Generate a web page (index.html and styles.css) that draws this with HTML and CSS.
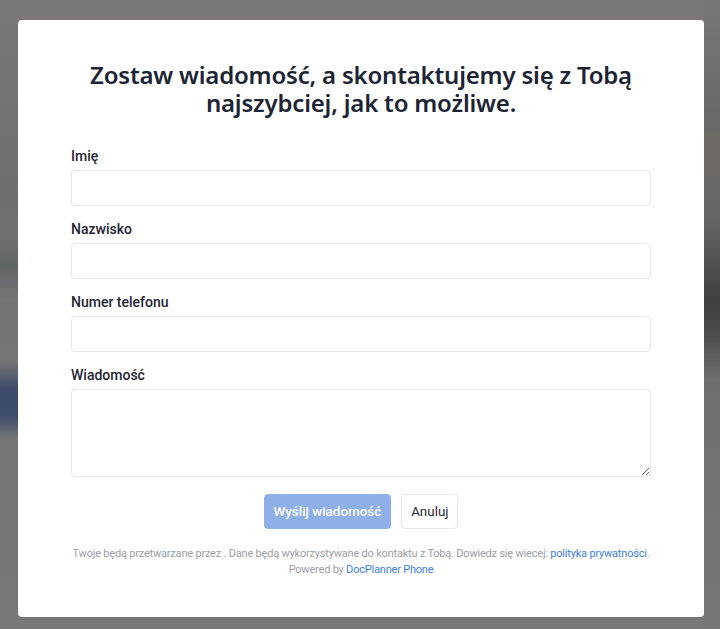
FILE: index.html
```html
<!DOCTYPE html>
<html lang="pl">
<head>
<meta charset="utf-8">
<title>Kontakt</title>
<link rel="stylesheet" href="styles.css">
</head>
<body>
<div class="backdrop"></div>
<div class="modal">
  <h1 class="title">Zostaw wiadomość, a skontaktujemy się z Tobą najszybciej, jak to możliwe.</h1>
  <form class="form">
    <div class="field">
      <label class="label">Imię</label>
      <input class="input" type="text">
    </div>
    <div class="field">
      <label class="label">Nazwisko</label>
      <input class="input" type="text">
    </div>
    <div class="field">
      <label class="label">Numer telefonu</label>
      <input class="input" type="text">
    </div>
    <div class="field">
      <label class="label">Wiadomość</label>
      <textarea class="textarea"></textarea>
    </div>
    <div class="actions">
      <button type="button" class="btn btn-primary">Wyślij wiadomość</button>
      <button type="button" class="btn btn-secondary">Anuluj</button>
    </div>
  </form>
  <p class="footer">Twoje będą przetwarzane przez . Dane będą wykorzystywane do kontaktu z Tobą. Dowiedz się wiecej: <a class="link" href="#">polityka prywatności</a>.<br>Powered by <a class="link" href="#">DocPlanner Phone</a></p>
</div>
</body>
</html>
```
FILE: styles.css
```css
html, body {
  margin: 0;
  padding: 0;
  height: 100%;
}
body {
  background: #787776;
  font-family: Roboto, "Liberation Sans", sans-serif;
  padding: 20px 16px 12px 18px;
  box-sizing: border-box;
  overflow: hidden;
  position: relative;
}
.backdrop {
  position: absolute;
  inset: 0;
  background:
    linear-gradient(180deg, transparent 0, transparent 230px, #616466 265px, transparent 300px, transparent 360px, #3b4a69 390px, #3d4c6b 415px, transparent 440px),
    linear-gradient(180deg, #7a7977 0, #6f6e6d 200px, #767574 260px, #7a7876 629px);
  z-index: 0;
}
.backdrop::after {
  content: "";
  position: absolute;
  right: 0;
  top: 0;
  width: 16px;
  height: 100%;
  background: linear-gradient(180deg, #787776 0, #6a6968 120px, #6e6a66 150px, #666 220px, #3f3f3f 300px, #4a4a4a 330px, #706f6d 380px, #787776 629px);
}
.modal {
  position: relative;
  z-index: 1;
  width: 686px;
  height: 597px;
  box-sizing: border-box;
  background: #fff;
  border-radius: 4px;
  padding: 41px 53px 0;
}
.title {
  margin: 0 auto 29px;
  font-family: "Noto Sans", Inter, sans-serif;
  font-weight: 600;
  font-size: 24px;
  line-height: 28px;
  color: #1d2433;
  text-align: center;
  max-width: 560px;
  letter-spacing: -0.2px;
}
.form {
  display: flex;
  flex-direction: column;
}
.field {
  display: flex;
  flex-direction: column;
  margin-bottom: 13px;
}
.label {
  font-size: 14px;
  font-weight: 500;
  line-height: 20px;
  color: #1f2633;
  margin-bottom: 4px;
}
.input, .textarea {
  box-sizing: border-box;
  width: 100%;
  border: 1px solid #e6e7ea;
  border-radius: 4px;
  background: #fff;
  font-family: inherit;
  font-size: 14px;
  margin: 0;
}
.input {
  height: 36px;
}
.textarea {
  height: 88px;
  resize: vertical;
  display: block;
}
.actions {
  display: flex;
  justify-content: center;
  gap: 10px;
  margin-top: 4px;
}
.btn {
  height: 35px;
  box-sizing: border-box;
  border-radius: 4px;
  font-family: Roboto, sans-serif;
  font-size: 13.4px;
  font-weight: 500;
  padding: 0 9px;
  cursor: pointer;
}
.btn-primary {
  background: #8eafe7;
  border: 1px solid #8eafe7;
  color: #fff;
}
.btn-secondary {
  background: #fff;
  border: 1px solid #e6e7ea;
  color: #1f2633;
  font-weight: 400;
}
.footer {
  margin: 17px 0 0;
  text-align: center;
  font-size: 11px;
  line-height: 16px;
  letter-spacing: -0.2px;
  white-space: nowrap;
  color: #9b9fa6;
}
.link {
  color: #3f7fe0;
  text-decoration: none;
}
```
